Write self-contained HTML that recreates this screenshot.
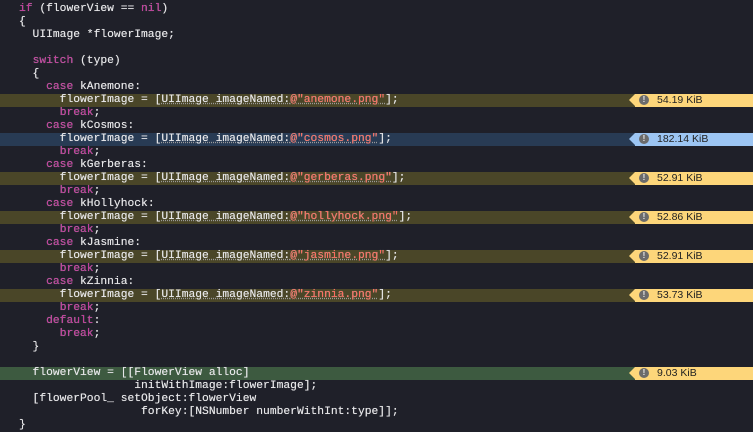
<!DOCTYPE html>
<html><head><meta charset="utf-8"><style>
body{margin:0;width:753px;height:421px;background:#1f2029;overflow:hidden;position:relative;font-family:"Liberation Mono",monospace;font-size:11.3px;color:#e6e6e8}
.w{position:absolute;left:0;top:1px;width:753px;height:430px}
.l{position:absolute;left:0;width:753px;height:13px;line-height:13px;white-space:pre;padding-left:19px;box-sizing:border-box;text-shadow:0 0 0.4px #e6e6e8}
.y{background:#4a4628}.b{background:#283b54}.g{background:#3d5a40}
.k{color:#c2379a}.s{color:#fc6a5d}
.u{text-decoration:underline dotted #9a9a9a}
.bd{position:absolute;left:629px;width:124px;height:13px}
.bd .a{position:absolute;left:0;top:0;width:0;height:0;border-top:6.5px solid transparent;border-bottom:6.5px solid transparent;border-right:6px solid}
.bd .r{position:absolute;left:6px;top:0;right:0;height:13px}
.bd .c{position:absolute;left:10px;top:1.5px;width:10px;height:10px;border-radius:50%;background:#6b6b6b;color:#eee;font:bold 8px/10px "Liberation Sans",sans-serif;text-align:center}
.bd .t{position:absolute;left:28px;top:0;font:10.5px/13px "Liberation Sans",sans-serif;color:#222}
</style></head><body><div class="w">
<div class="l" style="top:1.5px"><span class="k">if</span> (flowerView == <span class="k">nil</span>)</div>
<div class="l" style="top:14.5px">{</div>
<div class="l" style="top:27.5px">  UIImage *flowerImage;</div>
<div class="l" style="top:53.5px">  <span class="k">switch</span> (type)</div>
<div class="l" style="top:66.5px">  {</div>
<div class="l" style="top:79.5px">    <span class="k">case</span> kAnemone:</div>
<div class="l y" style="top:92.5px">      flowerImage = [<span class="u">UIImage imageNamed:<span class="s">@"anemone.png"</span></span>];</div>
<div class="l" style="top:105.5px">      <span class="k">break</span>;</div>
<div class="l" style="top:118.5px">    <span class="k">case</span> kCosmos:</div>
<div class="l b" style="top:131.5px">      flowerImage = [<span class="u">UIImage imageNamed:<span class="s">@"cosmos.png"</span></span>];</div>
<div class="l" style="top:144.5px">      <span class="k">break</span>;</div>
<div class="l" style="top:157.5px">    <span class="k">case</span> kGerberas:</div>
<div class="l y" style="top:170.5px">      flowerImage = [<span class="u">UIImage imageNamed:<span class="s">@"gerberas.png"</span></span>];</div>
<div class="l" style="top:183.5px">      <span class="k">break</span>;</div>
<div class="l" style="top:196.5px">    <span class="k">case</span> kHollyhock:</div>
<div class="l y" style="top:209.5px">      flowerImage = [<span class="u">UIImage imageNamed:<span class="s">@"hollyhock.png"</span></span>];</div>
<div class="l" style="top:222.5px">      <span class="k">break</span>;</div>
<div class="l" style="top:235.5px">    <span class="k">case</span> kJasmine:</div>
<div class="l y" style="top:248.5px">      flowerImage = [<span class="u">UIImage imageNamed:<span class="s">@"jasmine.png"</span></span>];</div>
<div class="l" style="top:261.5px">      <span class="k">break</span>;</div>
<div class="l" style="top:274.5px">    <span class="k">case</span> kZinnia:</div>
<div class="l y" style="top:287.5px">      flowerImage = [<span class="u">UIImage imageNamed:<span class="s">@"zinnia.png"</span></span>];</div>
<div class="l" style="top:300.5px">      <span class="k">break</span>;</div>
<div class="l" style="top:313.5px">    <span class="k">default</span>:</div>
<div class="l" style="top:326.5px">      <span class="k">break</span>;</div>
<div class="l" style="top:339.5px">  }</div>
<div class="l g" style="top:365.5px">  flowerView = [[FlowerView alloc]</div>
<div class="l" style="top:378.5px">                 initWithImage:flowerImage];</div>
<div class="l" style="top:391.5px">  [flowerPool_ setObject:flowerView</div>
<div class="l" style="top:404.5px">                  forKey:[NSNumber numberWithInt:type]];</div>
<div class="l" style="top:417.5px">}</div>

<div class="bd" style="top:92.5px"><div class="a" style="border-right-color:#fdd67a"></div><div class="r" style="background:#fdd67a"></div><div class="c">!</div><div class="t">54.19 KiB</div></div>
<div class="bd" style="top:131.5px"><div class="a" style="border-right-color:#9cc5f3"></div><div class="r" style="background:#9cc5f3"></div><div class="c">!</div><div class="t">182.14 KiB</div></div>
<div class="bd" style="top:170.5px"><div class="a" style="border-right-color:#fdd67a"></div><div class="r" style="background:#fdd67a"></div><div class="c">!</div><div class="t">52.91 KiB</div></div>
<div class="bd" style="top:209.5px"><div class="a" style="border-right-color:#fdd67a"></div><div class="r" style="background:#fdd67a"></div><div class="c">!</div><div class="t">52.86 KiB</div></div>
<div class="bd" style="top:248.5px"><div class="a" style="border-right-color:#fdd67a"></div><div class="r" style="background:#fdd67a"></div><div class="c">!</div><div class="t">52.91 KiB</div></div>
<div class="bd" style="top:287.5px"><div class="a" style="border-right-color:#fdd67a"></div><div class="r" style="background:#fdd67a"></div><div class="c">!</div><div class="t">53.73 KiB</div></div>
<div class="bd" style="top:365.5px"><div class="a" style="border-right-color:#fdd67a"></div><div class="r" style="background:#fdd67a"></div><div class="c">!</div><div class="t">9.03 KiB</div></div>
</div></body></html>
